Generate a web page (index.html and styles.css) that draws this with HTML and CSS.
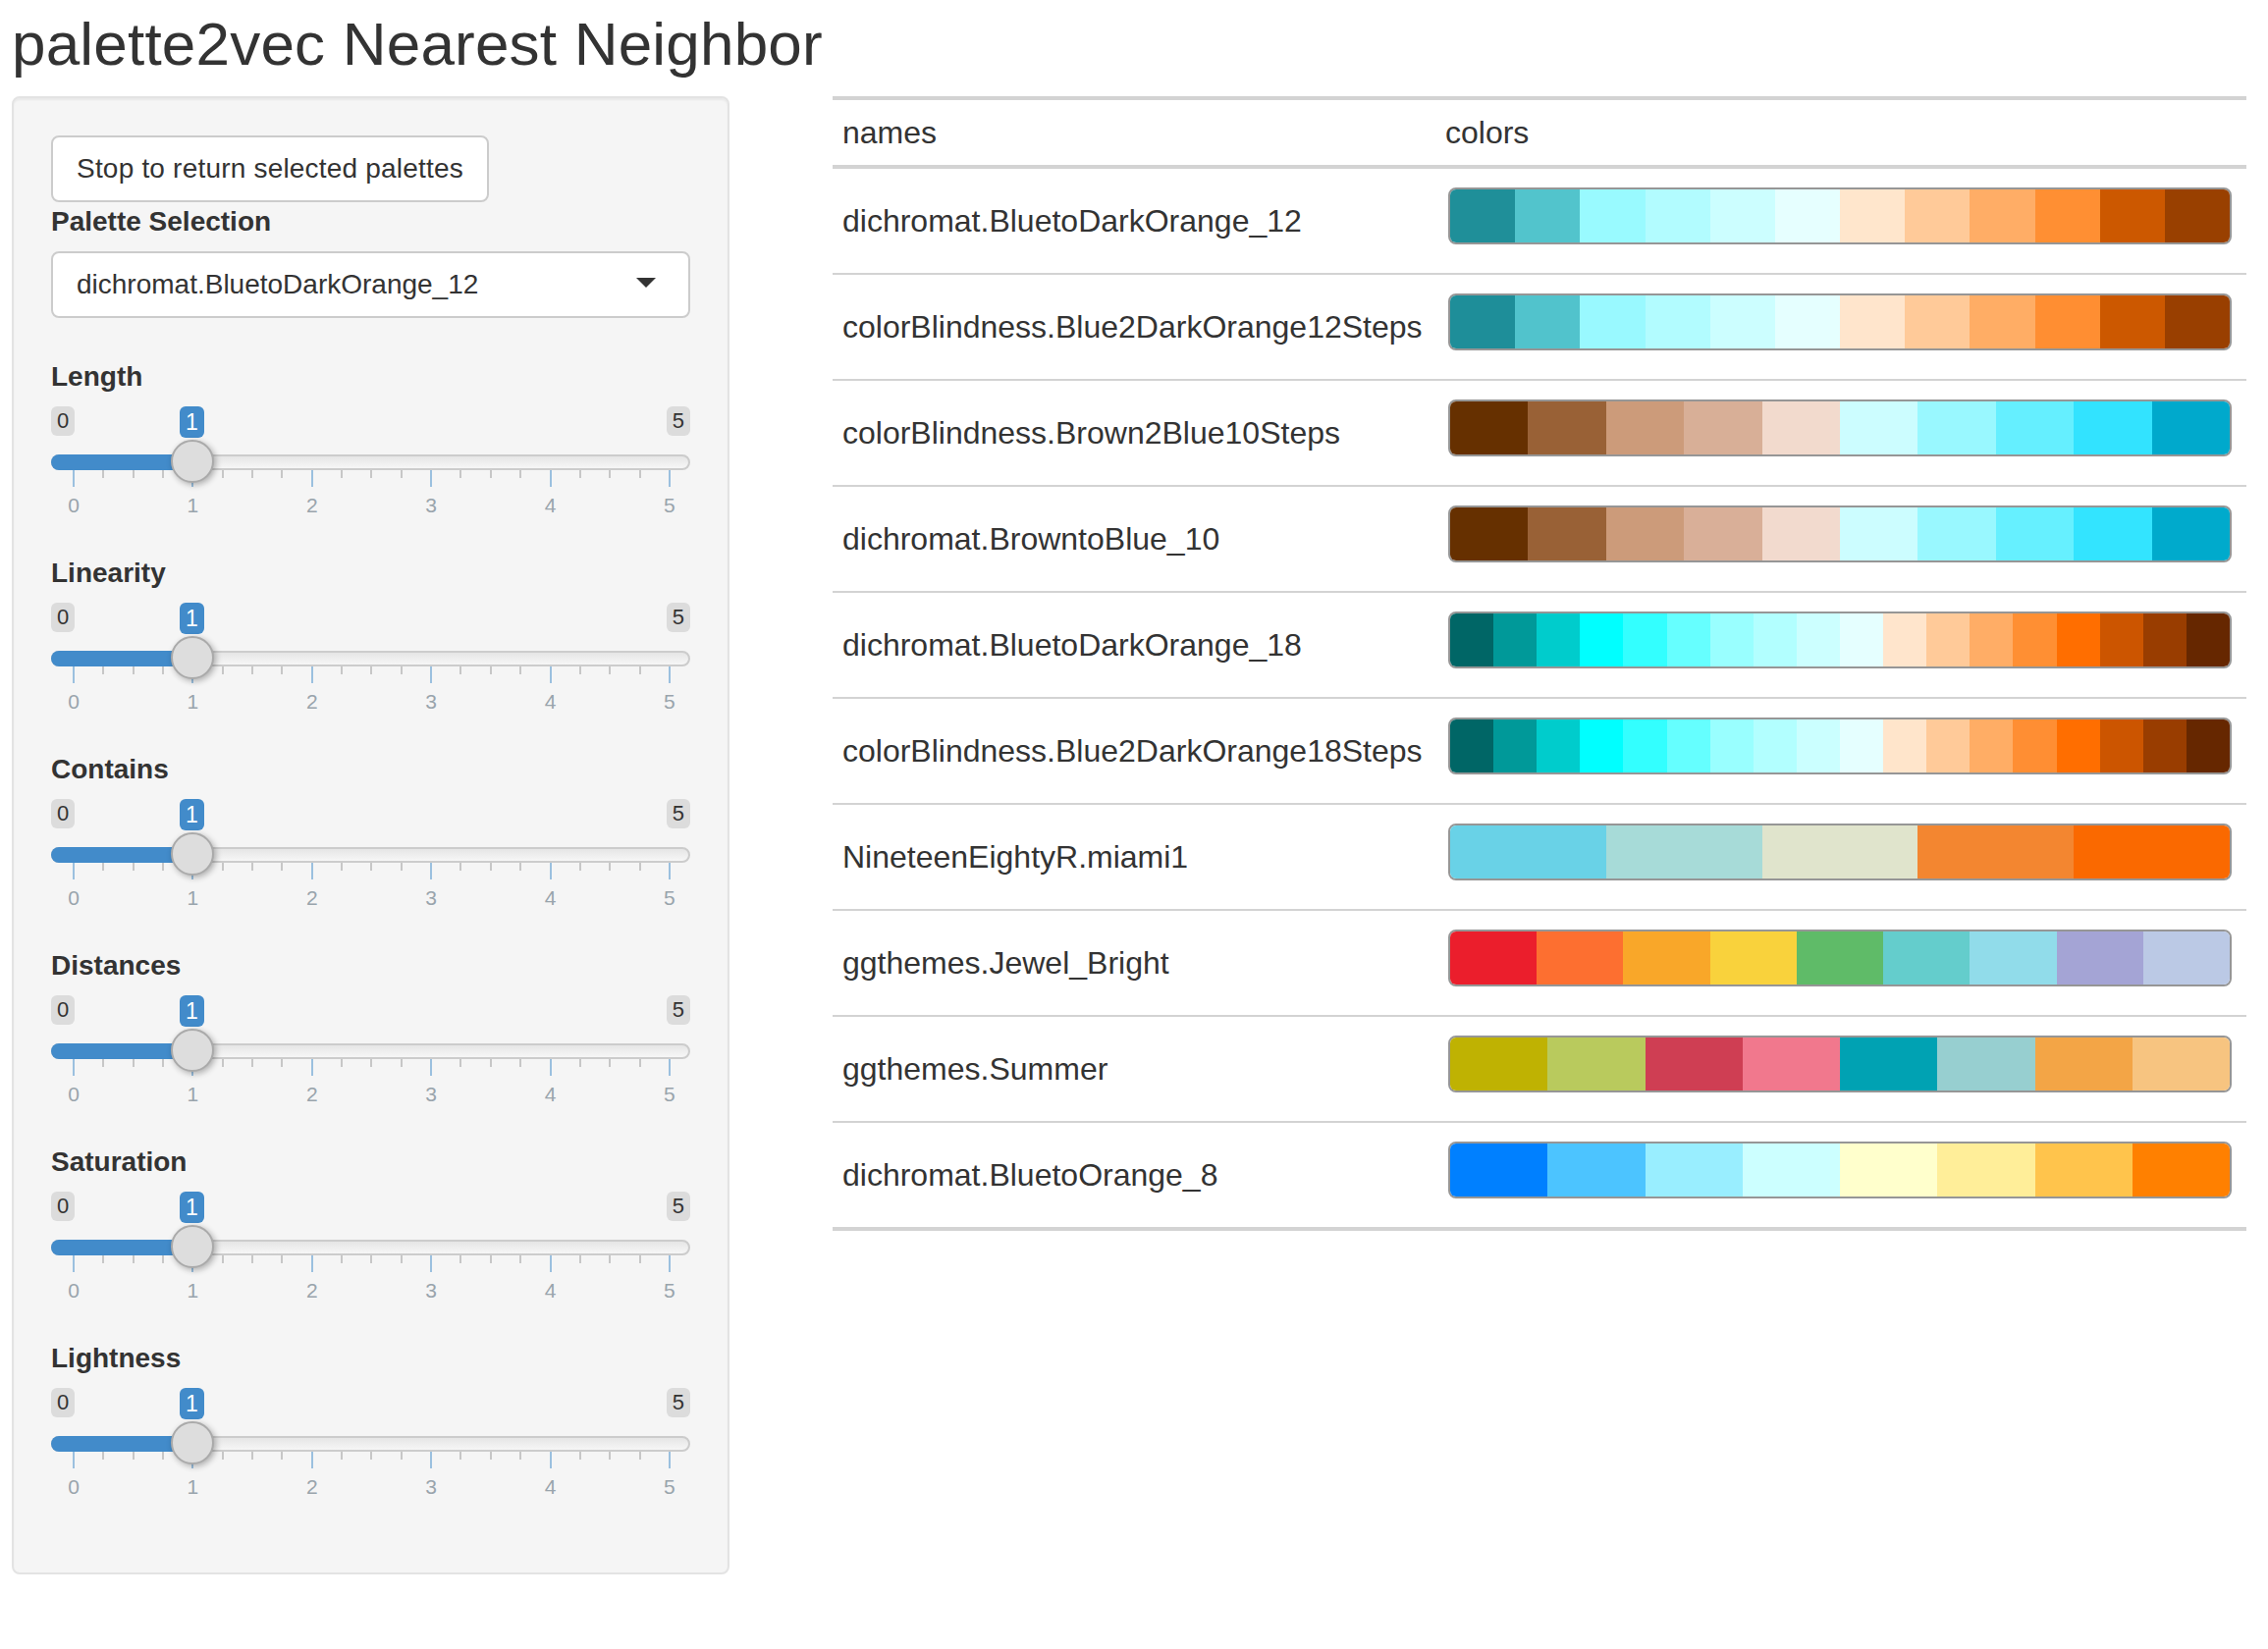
FILE: index.html
```html
<!DOCTYPE html>
<html lang="en">
<head>
<meta charset="utf-8">
<title>palette2vec Nearest Neighbor</title>
<link rel="stylesheet" href="styles.css">
</head>
<body>
<h2 class="title">palette2vec Nearest Neighbor</h2>
<div class="layout">
  <div class="well">
    <button class="btn">Stop to return selected palettes</button>
    <label class="ctl-label">Palette Selection</label>
    <div class="select">
      <span class="select-text">dichromat.BluetoDarkOrange_12</span>
      <span class="caret"></span>
    </div>

    <div class="slider-group">
      <label class="ctl-label">Length</label>
      <div class="irs">
        <span class="irs-line"></span><span class="irs-bar"></span>
        <span class="irs-min">0</span><span class="irs-single">1</span><span class="irs-max">5</span>
        <div class="irs-grid"><i class="major"></i><i></i><i></i><i></i><i class="major"></i><i></i><i></i><i></i><i class="major"></i><i></i><i></i><i></i><i class="major"></i><i></i><i></i><i></i><i class="major"></i><i></i><i></i><i></i><i class="major"></i></div>
        <div class="irs-grid-text"><span>0</span><span>1</span><span>2</span><span>3</span><span>4</span><span>5</span></div>
        <span class="irs-handle"></span>
      </div>
    </div>

    <div class="slider-group">
      <label class="ctl-label">Linearity</label>
      <div class="irs">
        <span class="irs-line"></span><span class="irs-bar"></span>
        <span class="irs-min">0</span><span class="irs-single">1</span><span class="irs-max">5</span>
        <div class="irs-grid"><i class="major"></i><i></i><i></i><i></i><i class="major"></i><i></i><i></i><i></i><i class="major"></i><i></i><i></i><i></i><i class="major"></i><i></i><i></i><i></i><i class="major"></i><i></i><i></i><i></i><i class="major"></i></div>
        <div class="irs-grid-text"><span>0</span><span>1</span><span>2</span><span>3</span><span>4</span><span>5</span></div>
        <span class="irs-handle"></span>
      </div>
    </div>

    <div class="slider-group">
      <label class="ctl-label">Contains</label>
      <div class="irs">
        <span class="irs-line"></span><span class="irs-bar"></span>
        <span class="irs-min">0</span><span class="irs-single">1</span><span class="irs-max">5</span>
        <div class="irs-grid"><i class="major"></i><i></i><i></i><i></i><i class="major"></i><i></i><i></i><i></i><i class="major"></i><i></i><i></i><i></i><i class="major"></i><i></i><i></i><i></i><i class="major"></i><i></i><i></i><i></i><i class="major"></i></div>
        <div class="irs-grid-text"><span>0</span><span>1</span><span>2</span><span>3</span><span>4</span><span>5</span></div>
        <span class="irs-handle"></span>
      </div>
    </div>

    <div class="slider-group">
      <label class="ctl-label">Distances</label>
      <div class="irs">
        <span class="irs-line"></span><span class="irs-bar"></span>
        <span class="irs-min">0</span><span class="irs-single">1</span><span class="irs-max">5</span>
        <div class="irs-grid"><i class="major"></i><i></i><i></i><i></i><i class="major"></i><i></i><i></i><i></i><i class="major"></i><i></i><i></i><i></i><i class="major"></i><i></i><i></i><i></i><i class="major"></i><i></i><i></i><i></i><i class="major"></i></div>
        <div class="irs-grid-text"><span>0</span><span>1</span><span>2</span><span>3</span><span>4</span><span>5</span></div>
        <span class="irs-handle"></span>
      </div>
    </div>

    <div class="slider-group">
      <label class="ctl-label">Saturation</label>
      <div class="irs">
        <span class="irs-line"></span><span class="irs-bar"></span>
        <span class="irs-min">0</span><span class="irs-single">1</span><span class="irs-max">5</span>
        <div class="irs-grid"><i class="major"></i><i></i><i></i><i></i><i class="major"></i><i></i><i></i><i></i><i class="major"></i><i></i><i></i><i></i><i class="major"></i><i></i><i></i><i></i><i class="major"></i><i></i><i></i><i></i><i class="major"></i></div>
        <div class="irs-grid-text"><span>0</span><span>1</span><span>2</span><span>3</span><span>4</span><span>5</span></div>
        <span class="irs-handle"></span>
      </div>
    </div>

    <div class="slider-group">
      <label class="ctl-label">Lightness</label>
      <div class="irs">
        <span class="irs-line"></span><span class="irs-bar"></span>
        <span class="irs-min">0</span><span class="irs-single">1</span><span class="irs-max">5</span>
        <div class="irs-grid"><i class="major"></i><i></i><i></i><i></i><i class="major"></i><i></i><i></i><i></i><i class="major"></i><i></i><i></i><i></i><i class="major"></i><i></i><i></i><i></i><i class="major"></i><i></i><i></i><i></i><i class="major"></i></div>
        <div class="irs-grid-text"><span>0</span><span>1</span><span>2</span><span>3</span><span>4</span><span>5</span></div>
        <span class="irs-handle"></span>
      </div>
    </div>
  </div>

  <div class="tbl">
    <div class="tr th">
      <div class="c-name">names</div>
      <div class="c-col">colors</div>
    </div>

    <div class="tr">
      <div class="c-name">dichromat.BluetoDarkOrange_12</div>
      <div class="c-col"><div class="pal">
        <span style="background:#1F8F99"></span><span style="background:#52C4CC"></span><span style="background:#99FAFF"></span><span style="background:#B2FCFF"></span><span style="background:#CCFEFF"></span><span style="background:#E6FFFF"></span><span style="background:#FFE6CC"></span><span style="background:#FFCA99"></span><span style="background:#FFAD66"></span><span style="background:#FF8F33"></span><span style="background:#CC5800"></span><span style="background:#994000"></span>
      </div></div>
    </div>

    <div class="tr">
      <div class="c-name">colorBlindness.Blue2DarkOrange12Steps</div>
      <div class="c-col"><div class="pal">
        <span style="background:#1E8E99"></span><span style="background:#51C3CC"></span><span style="background:#99F9FF"></span><span style="background:#B2FCFF"></span><span style="background:#CCFEFF"></span><span style="background:#E5FFFF"></span><span style="background:#FFE5CC"></span><span style="background:#FFCA99"></span><span style="background:#FFAD65"></span><span style="background:#FF8E32"></span><span style="background:#CC5800"></span><span style="background:#993F00"></span>
      </div></div>
    </div>

    <div class="tr">
      <div class="c-name">colorBlindness.Brown2Blue10Steps</div>
      <div class="c-col"><div class="pal">
        <span style="background:#663000"></span><span style="background:#996136"></span><span style="background:#CC9B7A"></span><span style="background:#D8AF97"></span><span style="background:#F2DACD"></span><span style="background:#CCFDFF"></span><span style="background:#99F8FF"></span><span style="background:#65EFFF"></span><span style="background:#32E3FF"></span><span style="background:#00A9CC"></span>
      </div></div>
    </div>

    <div class="tr">
      <div class="c-name">dichromat.BrowntoBlue_10</div>
      <div class="c-col"><div class="pal">
        <span style="background:#663000"></span><span style="background:#996136"></span><span style="background:#CC9B7A"></span><span style="background:#D9AF98"></span><span style="background:#F2DACE"></span><span style="background:#CCFDFF"></span><span style="background:#99F8FF"></span><span style="background:#66F0FF"></span><span style="background:#33E4FF"></span><span style="background:#00AACC"></span>
      </div></div>
    </div>

    <div class="tr">
      <div class="c-name">dichromat.BluetoDarkOrange_18</div>
      <div class="c-col"><div class="pal">
        <span style="background:#006666"></span><span style="background:#009999"></span><span style="background:#00CCCC"></span><span style="background:#00FFFF"></span><span style="background:#33FFFF"></span><span style="background:#66FFFF"></span><span style="background:#99FFFF"></span><span style="background:#B2FFFF"></span><span style="background:#CCFFFF"></span><span style="background:#E5FFFF"></span><span style="background:#FFE5CC"></span><span style="background:#FFCA99"></span><span style="background:#FFAD66"></span><span style="background:#FF8F33"></span><span style="background:#FF6E00"></span><span style="background:#CC5500"></span><span style="background:#993D00"></span><span style="background:#662700"></span>
      </div></div>
    </div>

    <div class="tr">
      <div class="c-name">colorBlindness.Blue2DarkOrange18Steps</div>
      <div class="c-col"><div class="pal">
        <span style="background:#006666"></span><span style="background:#009999"></span><span style="background:#00CCCC"></span><span style="background:#00FFFF"></span><span style="background:#33FFFF"></span><span style="background:#65FFFF"></span><span style="background:#99FFFF"></span><span style="background:#B2FFFF"></span><span style="background:#CBFFFF"></span><span style="background:#E5FFFF"></span><span style="background:#FFE5CB"></span><span style="background:#FFCA99"></span><span style="background:#FFAD65"></span><span style="background:#FF8E33"></span><span style="background:#FF6E00"></span><span style="background:#CC5500"></span><span style="background:#993D00"></span><span style="background:#662700"></span>
      </div></div>
    </div>

    <div class="tr">
      <div class="c-name">NineteenEightyR.miami1</div>
      <div class="c-col"><div class="pal">
        <span style="background:#69D2E7"></span><span style="background:#A7DBD8"></span><span style="background:#E0E4CC"></span><span style="background:#F38630"></span><span style="background:#FA6900"></span>
      </div></div>
    </div>

    <div class="tr">
      <div class="c-name">ggthemes.Jewel_Bright</div>
      <div class="c-col"><div class="pal">
        <span style="background:#EB1E2C"></span><span style="background:#FD6F30"></span><span style="background:#F9A729"></span><span style="background:#F9D23C"></span><span style="background:#5FBB68"></span><span style="background:#64CDCC"></span><span style="background:#91DCEA"></span><span style="background:#A4A4D5"></span><span style="background:#BBC9E5"></span>
      </div></div>
    </div>

    <div class="tr">
      <div class="c-name">ggthemes.Summer</div>
      <div class="c-col"><div class="pal">
        <span style="background:#BFB202"></span><span style="background:#B9CA5D"></span><span style="background:#CF3E53"></span><span style="background:#F1788D"></span><span style="background:#00A2B3"></span><span style="background:#97CFD0"></span><span style="background:#F3A546"></span><span style="background:#F7C480"></span>
      </div></div>
    </div>

    <div class="tr last">
      <div class="c-name">dichromat.BluetoOrange_8</div>
      <div class="c-col"><div class="pal">
        <span style="background:#0080FF"></span><span style="background:#4CC4FF"></span><span style="background:#99EEFF"></span><span style="background:#CCFFFF"></span><span style="background:#FFFFCC"></span><span style="background:#FFEE99"></span><span style="background:#FFC44C"></span><span style="background:#FF8000"></span>
      </div></div>
    </div>
  </div>
</div>
</body>
</html>
```

FILE: styles.css
```css
html, body {
  margin: 0;
  padding: 0;
  background: #ffffff;
}
body {
  padding: 12px 0 0 12px;
  font-family: "Liberation Sans", Arial, Helvetica, sans-serif;
  color: #333333;
  font-size: 28px;
}

.title {
  margin: 0 0 20px 0;
  font-size: 62px;
  line-height: 66px;
  font-weight: 400;
  letter-spacing: 0.2px;
  color: #333333;
}

.layout {
  display: flex;
  align-items: flex-start;
  gap: 105px;
}

/* ---------- sidebar well ---------- */
.well {
  box-sizing: border-box;
  width: 731px;
  padding: 38px;
  background: #f5f5f5;
  border: 2px solid #e3e3e3;
  border-radius: 8px;
  box-shadow: inset 0 2px 2px rgba(0, 0, 0, 0.05);
  display: flex;
  flex-direction: column;
  align-items: stretch;
}

.btn {
  align-self: flex-start;
  box-sizing: border-box;
  height: 68px;
  padding: 0 24px;
  background: #ffffff;
  border: 2px solid #cccccc;
  border-radius: 8px;
  font-family: inherit;
  font-size: 28px;
  line-height: 40px;
  letter-spacing: 0.2px;
  color: #333333;
}

.ctl-label {
  display: block;
  font-weight: 700;
  font-size: 28px;
  line-height: 40px;
  margin-bottom: 10px;
}

.select {
  box-sizing: border-box;
  height: 68px;
  background: #ffffff;
  border: 2px solid #cccccc;
  border-radius: 8px;
  padding: 0 33px 0 24px;
  display: flex;
  align-items: center;
  justify-content: space-between;
  margin-bottom: 40px;
}
.select-text {
  font-size: 28px;
  line-height: 40px;
}
.caret {
  width: 0;
  height: 0;
  border-left: 10px solid transparent;
  border-right: 10px solid transparent;
  border-top: 10px solid #333333;
  margin-top: -4px;
}

/* ---------- sliders ---------- */
.slider-group {
  margin-bottom: 30px;
}
.irs {
  position: relative;
  height: 120px;
}
.irs-line {
  position: absolute;
  left: 0;
  right: 0;
  top: 49px;
  height: 16px;
  box-sizing: border-box;
  border: 2px solid #cccccc;
  border-radius: 16px;
  background: linear-gradient(to bottom, #dddddd -50%, #ffffff 150%);
}
.irs-bar {
  position: absolute;
  left: 0;
  top: 49px;
  width: 144px;
  height: 16px;
  background: #428bca;
  border-radius: 16px 0 0 16px;
}
.irs-min, .irs-max {
  position: absolute;
  top: 0;
  font-size: 22px;
  line-height: 26px;
  padding: 2px 6px;
  border-radius: 6px;
  background: rgba(0, 0, 0, 0.1);
  color: #333333;
}
.irs-min { left: 0; }
.irs-max { right: 0; }
.irs-single {
  position: absolute;
  top: 0;
  left: 131px;
  font-size: 23px;
  line-height: 28px;
  padding: 2px 6px;
  border-radius: 6px;
  background: #428bca;
  color: #ffffff;
}
.irs-handle {
  position: absolute;
  left: 122px;
  top: 34px;
  width: 44px;
  height: 44px;
  box-sizing: border-box;
  border-radius: 50%;
  border: 2px solid #aaaaaa;
  background: #dddddd;
  box-shadow: 2px 2px 6px rgba(0, 0, 0, 0.3);
}
.irs-grid {
  position: absolute;
  left: 22px;
  right: 20px;
  top: 65px;
  height: 17px;
  display: flex;
  justify-content: space-between;
  align-items: flex-start;
}
.irs-grid i {
  display: block;
  width: 2px;
  height: 8px;
  background: #999999;
  opacity: 0.5;
}
.irs-grid i.major {
  height: 17px;
  background: #428bca;
  opacity: 0.5;
}
.irs-grid-text {
  position: absolute;
  left: 3px;
  right: 1px;
  top: 89px;
  display: flex;
  justify-content: space-between;
}
.irs-grid-text span {
  width: 40px;
  text-align: center;
  font-size: 21px;
  line-height: 24px;
  color: #99a4ac;
}

/* ---------- table ---------- */
.tbl {
  width: 1440px;
  display: flex;
  flex-direction: column;
  font-size: 32px;
  color: #333333;
}
.tr {
  display: grid;
  grid-template-columns: 614px 1fr;
  align-items: center;
  height: 106px;
  border-bottom: 2px solid #d3d3d3;
}
.tr.th {
  height: 66px;
  border-top: 4px solid #d3d3d3;
  border-bottom: 4px solid #d3d3d3;
}
.tr.last {
  border-bottom: 4px solid #d3d3d3;
}
.c-name {
  padding-left: 10px;
  line-height: 37px;
  white-space: nowrap;
}
.c-col {
  padding-left: 10px;
  line-height: 37px;
}
.pal {
  box-sizing: border-box;
  width: 798px;
  height: 58px;
  border: 2px solid #969696;
  border-radius: 8px;
  overflow: hidden;
  display: flex;
  margin-bottom: 11px;
  margin-left: 3px;
}
.pal span {
  flex: 1 1 0;
}
```
